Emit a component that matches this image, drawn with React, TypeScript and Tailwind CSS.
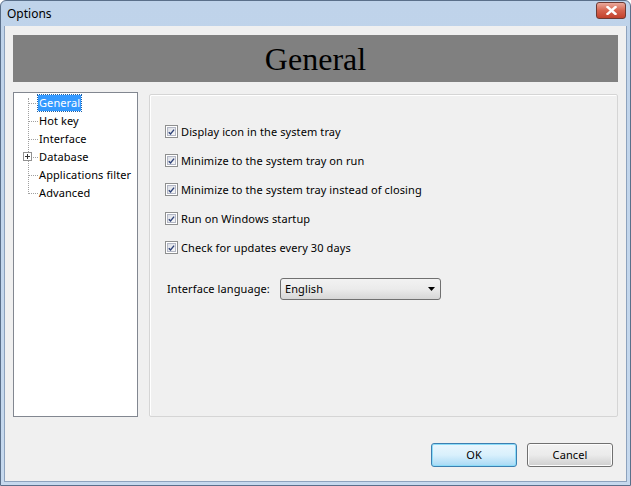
import React from "react";

const font = { fontFamily: '"Noto Sans", "Open Sans", sans-serif' };

function Check({ label }: { label: string }) {
  return (
    <div className="flex items-center h-[13px]">
      <div className="w-[13px] h-[13px] border border-[#8e8f8f] bg-white p-[1px] shrink-0">
        <div className="w-full h-full border border-[#b3b7c5] bg-gradient-to-br from-[#dcdfe6] to-[#f7f7f7] flex items-center justify-center">
          <svg width="9" height="8" viewBox="0 0 9 8">
            <path d="M1 4.2 L3.3 6.6 L7.8 1" fill="none" stroke="#2f4379" strokeWidth="1.8" />
          </svg>
        </div>
      </div>
      <span className="ml-[3px] text-[11px] tracking-[0.1px] text-black leading-none whitespace-nowrap">{label}</span>
    </div>
  );
}

function TreeItem({ label, selected, plus }: { label: string; selected?: boolean; plus?: boolean }) {
  return (
    <div className="relative h-[18px] flex items-center pl-[24px]">
      <div className="absolute left-[14px] top-[9px] w-[10px] border-t border-dotted border-[#a0a0a0]" />
      {plus && (
        <div className="absolute left-[9px] top-[4px] w-[9px] h-[9px] border border-[#919191] bg-white flex items-center justify-center">
          <div className="relative w-[5px] h-[5px]">
            <div className="absolute left-0 top-[2px] w-[5px] h-[1px] bg-[#333]" />
            <div className="absolute left-[2px] top-0 w-[1px] h-[5px] bg-[#333]" />
          </div>
        </div>
      )}
      <span
        className={
          "text-[11px] tracking-[0.1px] leading-[16px] px-[1px] whitespace-nowrap " +
          (selected ? "bg-[#3399ff] text-white outline outline-1 outline-dotted outline-[#1c5fa5]" : "text-black")
        }
      >
        {label}
      </span>
    </div>
  );
}

export default function App() {
  return (
    <div
      className="w-[631px] h-[486px] flex flex-col bg-gradient-to-b from-[#bfd3ea] to-[#c6d9ee] border border-[#5a6f8a] rounded-t-[6px] overflow-hidden"
      style={font}
    >
      <div className="h-[25px] flex items-center justify-between pl-[6px] pr-[4px] shrink-0">
        <span className="text-[12px] text-black">Options</span>
        <div className="w-[30px] h-[17px] mt-[-6px] rounded-[3px] border border-[#6d3a33] bg-gradient-to-b from-[#e9a99c] via-[#d5634e] to-[#c2412c] flex items-center justify-center">
          <svg width="11" height="9" viewBox="0 0 11 9">
            <path d="M1.5 1 L9.5 8 M9.5 1 L1.5 8" stroke="white" strokeWidth="2.4" strokeLinecap="square" />
          </svg>
        </div>
      </div>
      <div className="flex-1 mx-[3px] mb-[3px] bg-[#f0f0f0] border border-[#8da2bd] border-t-0 flex flex-col px-[8px] pt-[9px]">
        <div className="h-[47px] bg-[#808080] flex items-center justify-center">
          <span className="text-[32px] text-black leading-none" style={{ fontFamily: '"Liberation Serif", serif' }}>
            General
          </span>
        </div>
        <div className="flex mt-[10px] gap-[11px] h-[325px]">
          <div className="w-[125px] h-full bg-white border border-[#828790] pt-[1px] relative">
            <div className="absolute left-[14px] top-[5px] h-[96px] border-l border-dotted border-[#a0a0a0]" />
            <TreeItem label="General" selected />
            <TreeItem label="Hot key" />
            <TreeItem label="Interface" />
            <TreeItem label="Database" plus />
            <TreeItem label="Applications filter" />
            <TreeItem label="Advanced" />
          </div>
          <div className="flex-1 mt-[2px] border border-[#d5d5d5] rounded-[2px] shadow-[inset_1px_1px_0_#ffffff] flex flex-col pl-[15px] pt-[30px]">
            <div className="flex flex-col gap-[16px]">
              <Check label="Display icon in the system tray" />
              <Check label="Minimize to the system tray on run" />
              <Check label="Minimize to the system tray instead of closing" />
              <Check label="Run on Windows startup" />
              <Check label="Check for updates every 30 days" />
            </div>
            <div className="flex items-center mt-[24px] pl-[2px]">
              <span className="text-[11px] tracking-[0.1px] text-black w-[113px] whitespace-nowrap">Interface language:</span>
              <div className="w-[161px] h-[22px] border border-[#707070] rounded-[3px] bg-gradient-to-b from-[#f2f2f2] via-[#ebebeb] to-[#d6d6d6] flex items-center justify-between pl-[4px] pr-[5px]">
                <span className="text-[11px] tracking-[0.1px] text-black">English</span>
                <svg width="7" height="4" viewBox="0 0 7 4">
                  <path d="M0 0 H7 L3.5 4 Z" fill="#000" />
                </svg>
              </div>
            </div>
          </div>
        </div>
        <div className="flex justify-end gap-[10px] mt-[26px] pr-[5px]">
          <div className="w-[86px] h-[24px] rounded-[3px] border border-[#3c7fb1] shadow-[inset_0_0_0_1px_#8cdcf8] bg-gradient-to-b from-[#eaf6fd] via-[#d9f0fc] to-[#a7d9f5] flex items-center justify-center text-[11px] tracking-[0.1px] text-black">
            OK
          </div>
          <div className="w-[86px] h-[24px] rounded-[3px] border border-[#707070] shadow-[inset_0_0_0_1px_#fcfcfc] bg-gradient-to-b from-[#f2f2f2] via-[#ebebeb] to-[#cfcfcf] flex items-center justify-center text-[11px] tracking-[0.1px] text-black">
            Cancel
          </div>
        </div>
      </div>
    </div>
  );
}
